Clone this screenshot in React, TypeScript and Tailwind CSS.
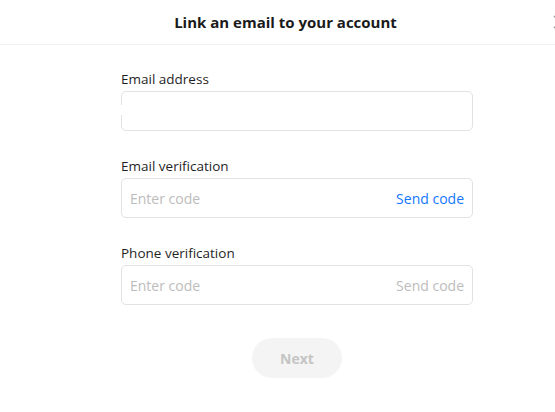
import React from "react";

export default function App() {
  const font = { fontFamily: "'Open Sans', Lato, sans-serif" };
  return (
    <div className="w-[555px] h-[412px] overflow-hidden bg-white" style={font}>
      <div className="w-[570px] relative">
        <div className="h-[45px] border-b border-[#f0f0f0] flex items-center justify-center">
          <h1 className="text-[15px] font-bold text-[#1a1a1a] pl-[1px]">Link an email to your account</h1>
        </div>
        <svg className="absolute left-[553px] top-[15px]" width="14" height="14" viewBox="0 0 14 14">
          <path d="M1 1L13 13M13 1L1 13" stroke="#999" strokeWidth="1.4" />
        </svg>
        <div className="ml-[121px] w-[352px] pt-[24px] flex flex-col gap-[25px]">
          <div className="flex flex-col gap-[2px]">
            <label className="text-[13.5px] leading-[20px] text-[#1f1f1f]">Email address</label>
            <div className="relative h-[40px] rounded-[5px] border border-[#e2e2e2]">
              <span className="absolute left-[-1px] top-[13px] w-[2px] h-[10px] bg-white" />
            </div>
          </div>
          <div className="flex flex-col gap-[2px]">
            <label className="text-[13.5px] leading-[20px] text-[#1f1f1f]">Email verification</label>
            <div className="h-[40px] rounded-[5px] border border-[#e2e2e2] flex items-center justify-between px-[8px]">
              <span className="text-[14px] text-[#bcbcbc]">Enter code</span>
              <span className="text-[14px] text-[#1677ff]">Send code</span>
            </div>
          </div>
          <div className="flex flex-col gap-[2px]">
            <label className="text-[13.5px] leading-[20px] text-[#1f1f1f]">Phone verification</label>
            <div className="h-[40px] rounded-[5px] border border-[#e2e2e2] flex items-center justify-between px-[8px]">
              <span className="text-[14px] text-[#bcbcbc]">Enter code</span>
              <span className="text-[14px] text-[#bcbcbc]">Send code</span>
            </div>
          </div>
          <div className="flex justify-center pt-[8px]">
            <button className="w-[90px] h-[40px] rounded-full bg-[#f4f4f4] text-[14px] font-bold text-[#c4c4c4]">Next</button>
          </div>
        </div>
      </div>
    </div>
  );
}
